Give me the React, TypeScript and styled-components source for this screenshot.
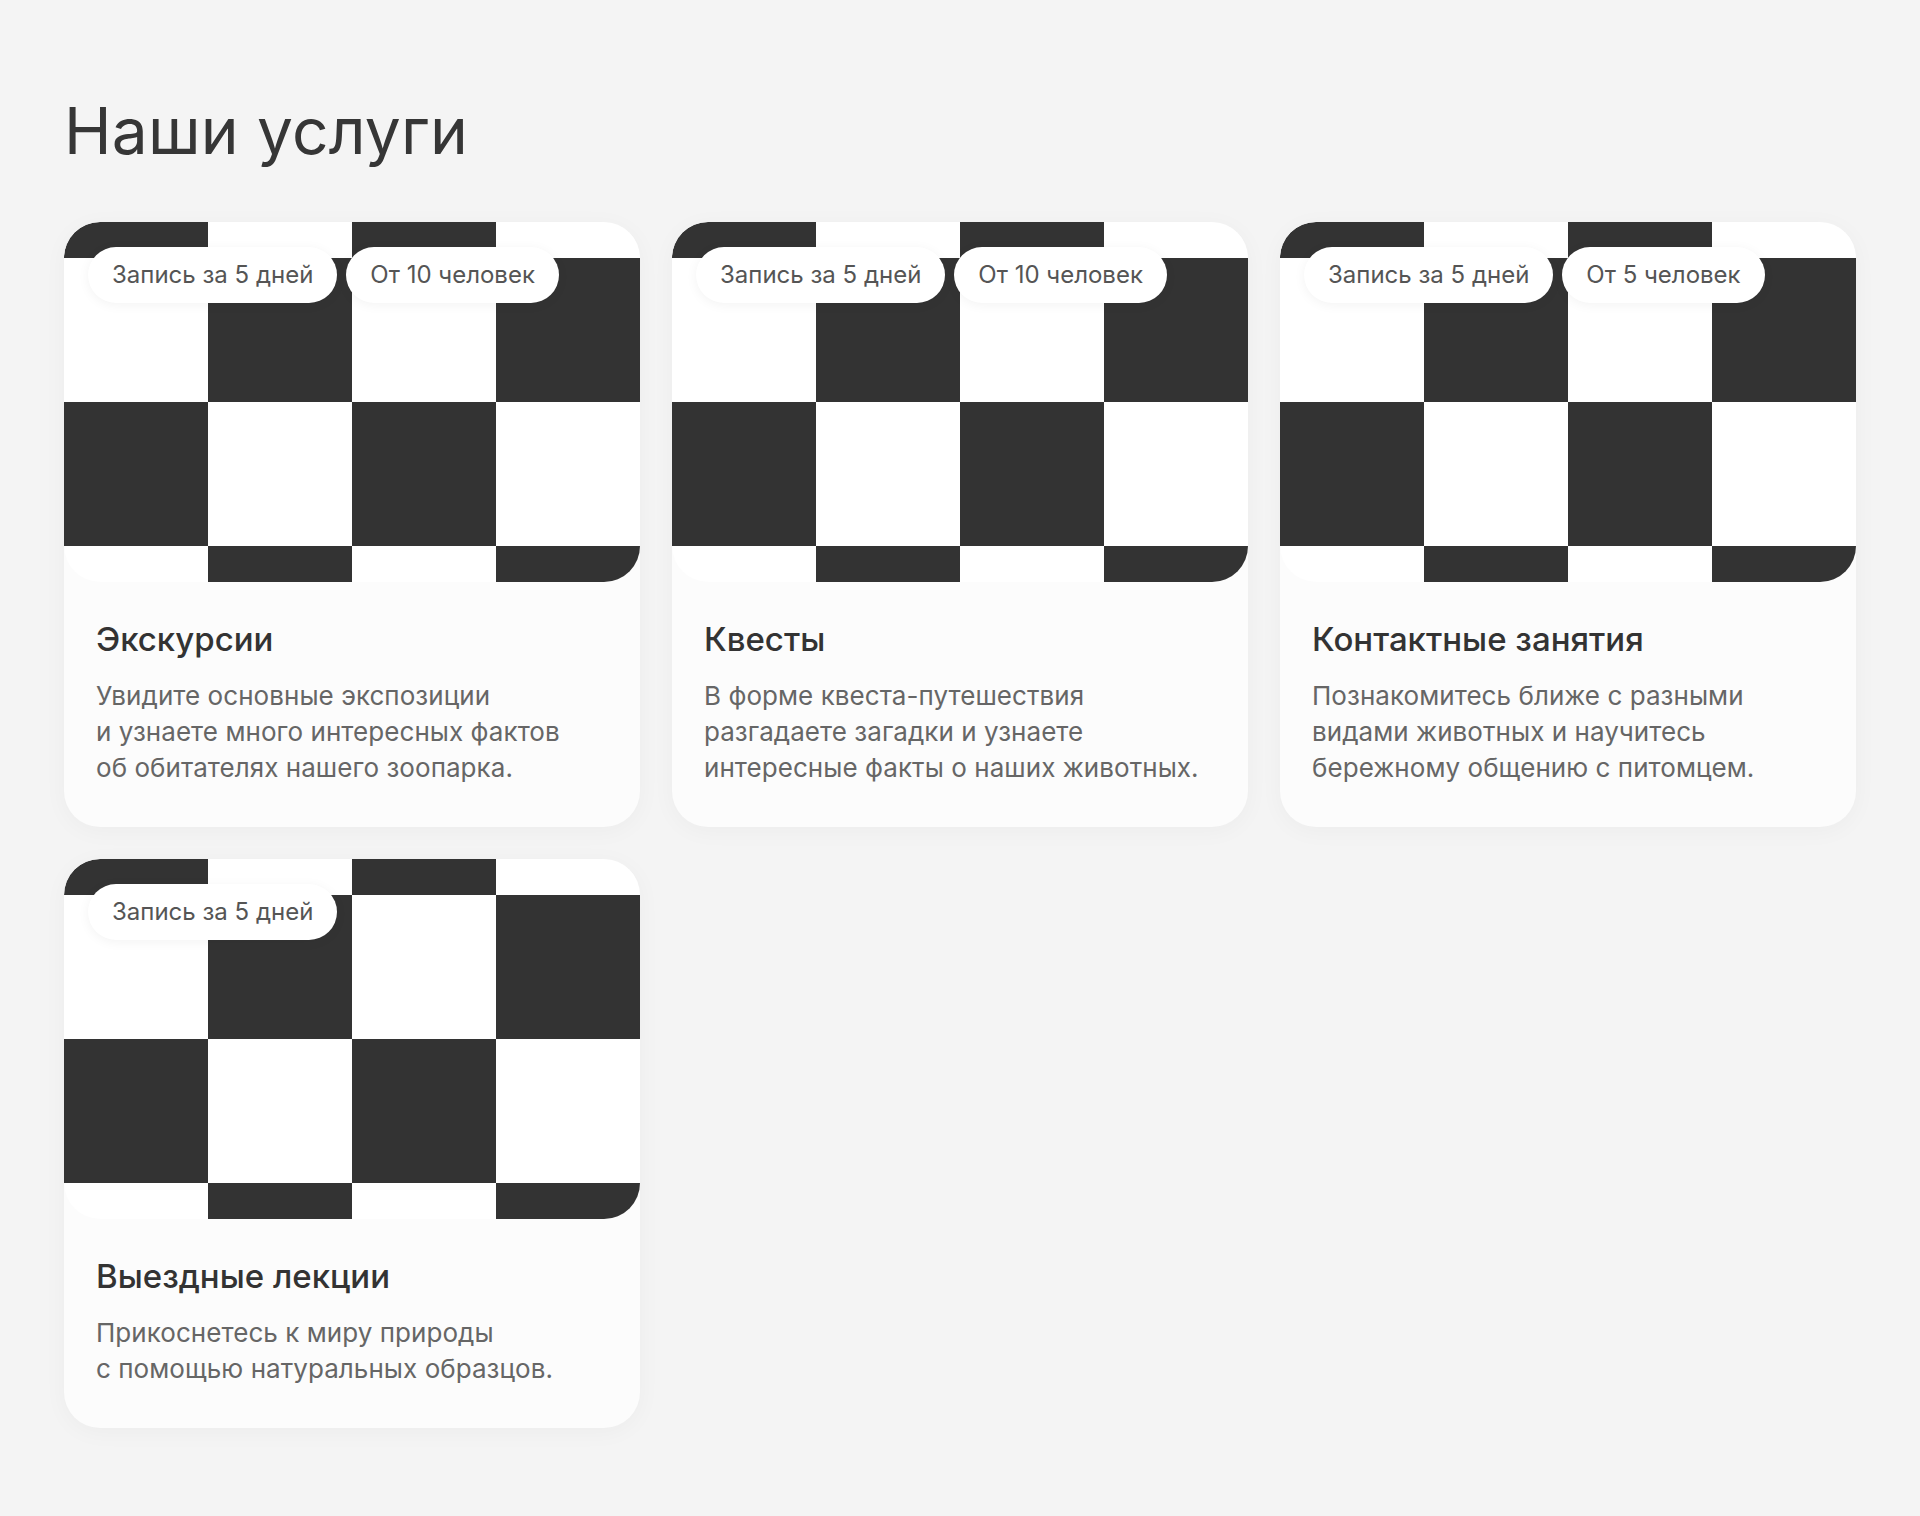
import styled, { createGlobalStyle } from 'styled-components';

type Service = {
  title: string;
  tags: string[];
  lines: string[];
};

const services: Service[] = [
  {
    title: 'Экскурсии',
    tags: ['Запись за 5 дней', 'От 10 человек'],
    lines: [
      'Увидите основные экспозиции',
      'и узнаете много интересных фактов',
      'об обитателях нашего зоопарка.',
    ],
  },
  {
    title: 'Квесты',
    tags: ['Запись за 5 дней', 'От 10 человек'],
    lines: [
      'В форме квеста-путешествия',
      'разгадаете загадки и узнаете',
      'интересные факты о наших животных.',
    ],
  },
  {
    title: 'Контактные занятия',
    tags: ['Запись за 5 дней', 'От 5 человек'],
    lines: [
      'Познакомитесь ближе с разными',
      'видами животных и научитесь',
      'бережному общению с питомцем.',
    ],
  },
  {
    title: 'Выездные лекции',
    tags: ['Запись за 5 дней'],
    lines: ['Прикоснетесь к миру природы', 'с помощью натуральных образцов.'],
  },
];

export default function App() {
  return (
    <>
      <GlobalStyle />
      <Page>
        <Heading>Наши услуги</Heading>
        <Grid>
          {services.map((service) => (
            <Card key={service.title}>
              <Cover>
                <Tags>
                  {service.tags.map((tag) => (
                    <Tag key={tag}>{tag}</Tag>
                  ))}
                </Tags>
              </Cover>
              <Body>
                <Title>{service.title}</Title>
                <Text>
                  {service.lines.map((line, i) => (
                    <span key={i}>
                      {line}
                      {i < service.lines.length - 1 && <br />}
                    </span>
                  ))}
                </Text>
              </Body>
            </Card>
          ))}
        </Grid>
      </Page>
    </>
  );
}

const GlobalStyle = createGlobalStyle`
  html, body {
    margin: 0;
    padding: 0;
    background: #f4f4f4;
  }

  body {
    font-family: Inter, 'Noto Sans', sans-serif;
    color: #333333;
  }

  * {
    box-sizing: border-box;
  }
`;

const Page = styled.main`
  min-height: 1516px;
  padding: 93px 64px 64px;
  background: #f4f4f4;
`;

const Heading = styled.h1`
  margin: 0 0 52px;
  font-size: 64px;
  line-height: 76.8px;
  font-weight: 400;
  letter-spacing: 0.2px;
  color: #363636;
`;

const Grid = styled.div`
  display: grid;
  grid-template-columns: repeat(3, 576px);
  gap: 32px;
  align-items: start;
`;

const Card = styled.article`
  display: flex;
  flex-direction: column;
  background: #fcfcfc;
  border-radius: 36px;
  box-shadow: 0 4px 24px rgba(0, 0, 0, 0.035);
  overflow: hidden;
`;

const Cover = styled.div`
  position: relative;
  height: 360px;
  border-radius: 36px;
  background-color: #ffffff;
  background-image: repeating-conic-gradient(#ffffff 0 25%, #333333 0 50%);
  background-size: 288px 288px;
  background-position: 0 -108px;
`;

const Tags = styled.div`
  position: absolute;
  top: 25px;
  left: 24px;
  display: flex;
  gap: 9px;
`;

const Tag = styled.span`
  display: inline-flex;
  align-items: center;
  height: 56px;
  padding: 0 24px;
  border-radius: 28px;
  background: #ffffff;
  box-shadow: 0 2px 12px rgba(0, 0, 0, 0.05);
  font-size: 24px;
  line-height: 32px;
  color: #555555;
  white-space: nowrap;
`;

const Body = styled.div`
  display: flex;
  flex-direction: column;
  gap: 19px;
  padding: 37px 32px 41px;
`;

const Title = styled.h2`
  margin: 0;
  font-size: 33px;
  line-height: 40px;
  font-weight: 500;
  color: #333333;
`;

const Text = styled.p`
  margin: 0;
  font-size: 26px;
  line-height: 36px;
  font-weight: 400;
  letter-spacing: 0.05px;
  color: #666666;
`;
